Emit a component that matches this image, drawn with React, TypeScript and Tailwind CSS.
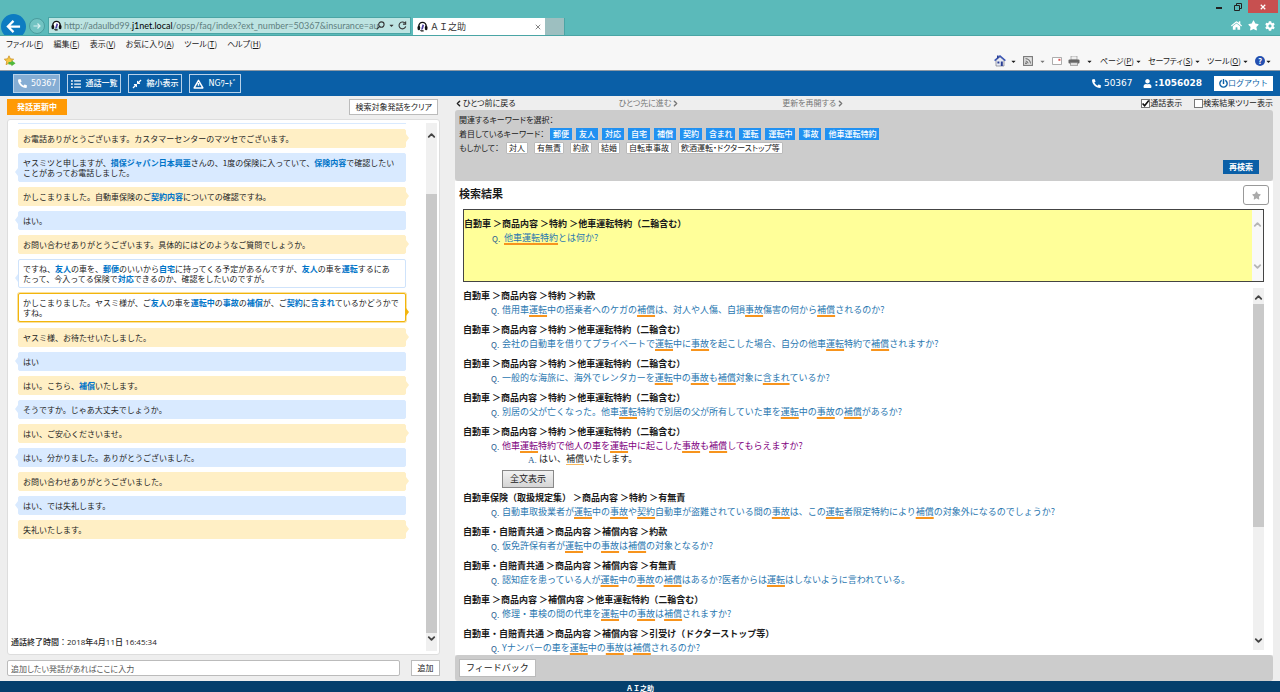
import type { ReactNode } from 'react';
import {
  FaCaretDown,
  FaCog,
  FaCompressAlt,
  FaHome,
  FaListUl,
  FaPhoneAlt,
  FaPowerOff,
  FaStar,
  FaUser,
} from 'react-icons/fa';
import { ChevronDown, ChevronLeft, ChevronRight, ChevronUp } from 'lucide-react';

type Message = { from: 'operator' | 'customer'; text: string; state?: 'hit' | 'active' };

// [ ] marks a keyword
const messages: Message[] = [
  { from: 'operator', text: 'お電話ありがとうございます。カスタマーセンターのマツセでございます。' },
  {
    from: 'customer',
    text: 'ヤスミツと申しますが、[損保ジャパン日本興亜]さんの、1度の保険に入っていて、[保険内容]で確認したいことがあってお電話しました。',
  },
  { from: 'operator', text: 'かしこまりました。自動車保険のご[契約内容]についての確認ですね。' },
  { from: 'customer', text: 'はい。' },
  { from: 'operator', text: 'お問い合わせありがとうございます。具体的にはどのようなご質問でしょうか。' },
  {
    from: 'customer',
    state: 'hit',
    text: 'ですね、[友人]の車を、[郵便]のいいから[自宅]に持ってくる予定があるんですが、[友人]の車を[運転]するにあたって、今入ってる保険で[対応]できるのか、確認をしたいのですが。',
  },
  {
    from: 'operator',
    state: 'active',
    text: 'かしこまりました。ヤスミ様が、ご[友人]の車を[運転中]の[事故]の[補償]が、ご[契約]に[含まれ]ているかどうかですね。',
  },
  { from: 'operator', text: 'ヤスミ様、お待たせいたしました。' },
  { from: 'customer', text: 'はい' },
  { from: 'operator', text: 'はい。こちら、[補償]いたします。' },
  { from: 'customer', text: 'そうですか。じゃあ大丈夫でしょうか。' },
  { from: 'operator', text: 'はい、ご安心くださいませ。' },
  { from: 'customer', text: 'はい。分かりました。ありがとうございました。' },
  { from: 'operator', text: 'お問い合わせありがとうございました。' },
  { from: 'customer', text: 'はい、では失礼します。' },
  { from: 'operator', text: '失礼いたします。' },
];

const keywords = ['郵便', '友人', '対応', '自宅', '補償', '契約', '含まれ', '運転', '運転中', '事故', '他車運転特約'];
const suggestions = ['対人', '有無責', '約款', '結婚', '自転車事故', '飲酒運転・ドクターストップ等'];

type Result = { path: string; question: string; answer?: string };

const results: Result[] = [
  {
    path: '自動車 ＞商品内容 ＞特約 ＞約款',
    question: '借用車[運転]中の搭乗者へのケガの[補償]は、対人や人傷、自損[事故]傷害の何から[補償]されるのか?',
  },
  {
    path: '自動車 ＞商品内容 ＞特約 ＞他車運転特約（二輪含む）',
    question: '会社の自動車を借りてプライベートで[運転]中に[事故]を起こした場合、自分の他車[運転]特約で[補償]されますか?',
  },
  {
    path: '自動車 ＞商品内容 ＞特約 ＞他車運転特約（二輪含む）',
    question: '一般的な海旅に、海外でレンタカーを[運転]中の[事故]も[補償]対象に[含まれ]ているか?',
  },
  {
    path: '自動車 ＞商品内容 ＞特約 ＞他車運転特約（二輪含む）',
    question: '別居の父が亡くなった。他車[運転]特約で別居の父が所有していた車を[運転]中の[事故]の[補償]があるか?',
  },
  {
    path: '自動車 ＞商品内容 ＞特約 ＞他車運転特約（二輪含む）',
    question: '他車[運転]特約で他人の車を[運転]中に起こした[事故]も[補償]してもらえますか?',
    answer: 'はい、[補償]いたします。',
  },
  {
    path: '自動車保険（取扱規定集） ＞商品内容 ＞特約 ＞有無責',
    question:
      '自動車取扱業者が[運転]中の[事故]や[契約]自動車が盗難されている間の[事故]は、この[運転]者限定特約により[補償]の対象外になるのでしょうか?',
  },
  {
    path: '自動車・自賠責共通 ＞商品内容 ＞補償内容 ＞約款',
    question: '仮免許保有者が[運転]中の[事故]は[補償]の対象となるか?',
  },
  {
    path: '自動車・自賠責共通 ＞商品内容 ＞補償内容 ＞有無責',
    question: '認知症を患っている人が[運転]中の[事故]の[補償]はあるか?医者からは[運転]はしないように言われている。',
  },
  {
    path: '自動車 ＞商品内容 ＞補償内容 ＞他車運転特約（二輪含む）',
    question: '修理・車検の間の代車を[運転]中の[事故]は[補償]されますか?',
  },
  {
    path: '自動車・自賠責共通 ＞商品内容 ＞補償内容 ＞引受け（ドクターストップ等）',
    question: 'Yナンバーの車を[運転]中の[事故]は[補償]されるのか?',
  },
];

const hitUnderline =
  'underline decoration-[#f7941d] decoration-2 underline-offset-2 [text-decoration-skip-ink:none]';

function Marked({ text, className }: { text: string; className: string }) {
  return (
    <>
      {text.split(/[[\]]/).map((part, i) =>
        i % 2 ? (
          <span key={i} className={className}>
            {part}
          </span>
        ) : (
          part
        ),
      )}
    </>
  );
}

function Favicon() {
  return (
    <svg viewBox="0 0 12 12" className="size-[11px] shrink-0">
      <path d="M2 8V5.5a4 4 0 0 1 8 0V8" fill="#fff" stroke="#111" strokeWidth="1.6" />
      <rect x="0.6" y="5.5" width="2.8" height="4.5" rx="1.2" fill="#111" />
      <rect x="8.6" y="5.5" width="2.8" height="4.5" rx="1.2" fill="#111" />
      <path d="M4.4 9.5 6 3.5l1.8 1L6.4 9z" fill="#4b3fa0" />
      <path d="M3 10.2h4.2v1.2H4.5z" fill="#111" />
    </svg>
  );
}

function BrowserTop() {
  return (
    <div className="flex h-9 shrink-0 justify-between overflow-hidden border-b border-[#4aa5a5] bg-[#5bbaba] pl-px">
      <div className="flex min-w-0 items-end">
        <button aria-label="戻る" className="-mb-1 flex size-[25px] shrink-0 items-center justify-center rounded-full bg-[#0d7cc1]">
          <svg viewBox="0 0 16 16" className="size-[15px]" fill="none" stroke="#fff" strokeWidth="2.4">
            <path d="M15 8H2M8 2 2 8l6 6" />
          </svg>
        </button>
        <button
          aria-label="進む"
          className="mb-px ml-[3px] flex size-4 shrink-0 items-center justify-center rounded-full border border-[#4a9c9e] bg-[#71c3c2]"
        >
          <svg viewBox="0 0 16 16" className="size-2" fill="none" stroke="#d9f2f1" strokeWidth="2.4">
            <path d="M1 8h13M9 3l5 5-5 5" />
          </svg>
        </button>
        <div className="mb-px ml-[3px] flex h-[17px] w-[363px] items-center border border-[#4aa5a5] bg-[#bde4e2] px-[2px]">
          <Favicon />
          <div className="ml-[2px] min-w-0 flex-1 font-[Lato,'Noto_Sans_CJK_JP',sans-serif] text-[9px] leading-3 whitespace-nowrap text-[#5f7f80]">
            http://adaulbd99.<span className="text-black">j1net.local</span>/opsp/faq/index?ext_number=50367&amp;insurance=au
          </div>
          <button aria-label="検索" className="ml-[2px] flex items-center">
            <svg viewBox="0 0 10 10" className="size-[9px]" fill="none" stroke="#333" strokeWidth="1.2">
              <circle cx="6" cy="4" r="3" />
              <path d="M4 6 .8 9.2" />
            </svg>
          </button>
          <FaCaretDown className="ml-[3px] size-[7px] text-[#333]" />
          <button aria-label="更新" className="mr-px ml-[3px] flex items-center">
            <svg viewBox="0 0 10 10" className="size-[9px]" fill="none" stroke="#333" strokeWidth="1.2">
              <path d="M8.6 6A3.8 3.8 0 1 1 7.6 2.2M8.5.5v3h-3" />
            </svg>
          </button>
        </div>
        <div className="ml-[2px] flex h-[17px] w-[132px] items-center bg-white px-1 text-[9px] text-[#333]">
          <Favicon />
          <span className="ml-[2px] flex-1">ＡＩ之助</span>
          <button aria-label="タブを閉じる">
            <svg viewBox="0 0 8 8" className="size-[6px]" stroke="#777" strokeWidth="1.2">
              <path d="m1 1 6 6M7 1 1 7" />
            </svg>
          </button>
        </div>
        <button aria-label="新しいタブ" className="h-[17px] w-5 border-r border-[#4aa5a5] bg-[#9dbfc0]" />
      </div>
      <div className="flex flex-col items-end justify-between">
        <div className="mr-[2px] flex h-[13px] items-center">
          <button aria-label="最小化" className="mt-[2px] mr-3 h-[2px] w-[6px] bg-[#222]" />
          <button aria-label="元に戻す" className="mr-[6px]">
            <svg viewBox="0 0 8 8" className="size-[8px]" fill="none" stroke="#222">
              <path d="M.5 2.5h5v5h-5zM2.5 2.5v-2h5v5h-2" />
            </svg>
          </button>
          <button aria-label="閉じる" className="flex h-[13px] w-[30px] items-center justify-center bg-[#c75050]">
            <svg viewBox="0 0 8 8" className="size-[6px]" stroke="#fff" strokeWidth="1.6">
              <path d="m1 1 6 6M7 1 1 7" />
            </svg>
          </button>
        </div>
        <div className="mr-[5px] mb-1 flex items-center gap-[6px] text-white">
          <FaHome className="size-[11px]" />
          <FaStar className="size-[11px]" />
          <FaCog className="size-[10px]" />
        </div>
      </div>
    </div>
  );
}

function MenuItem({ label, hotkey }: { label: string; hotkey: string }) {
  return (
    <button>
      {label}(<span className="underline">{hotkey}</span>)
    </button>
  );
}

function CommandMenu({ label, hotkey }: { label: string; hotkey: string }) {
  return (
    <button className="flex items-center gap-px">
      <span>
        {label}(<span className="underline">{hotkey}</span>)
      </span>
      <FaCaretDown className="size-[7px]" />
    </button>
  );
}

function MenuBars() {
  return (
    <div className="shrink-0 border-b border-[#8d99a5] bg-[#f7f7f7] text-[8px] text-[#1a1a1a] [font-feature-settings:'palt']">
      <div className="flex h-4 items-center gap-[10px] px-[6px]">
        <MenuItem label="ファイル" hotkey="F" />
        <MenuItem label="編集" hotkey="E" />
        <MenuItem label="表示" hotkey="V" />
        <MenuItem label="お気に入り" hotkey="A" />
        <MenuItem label="ツール" hotkey="T" />
        <MenuItem label="ヘルプ" hotkey="H" />
      </div>
      <div className="flex h-[18px] items-center justify-between pr-2 pl-1">
        <svg viewBox="0 0 12 12" className="size-3">
          <path d="m5 .8 1.4 3 3.3.4-2.4 2.3.6 3.2L5 8.1 2.1 9.7l.6-3.2L.3 4.2l3.3-.4z" fill="#f5c842" stroke="#c98a1b" strokeWidth=".7" />
          <path d="M4.5 7h3V5.2l4 3-4 3V9.4h-3z" fill="#4fb83d" />
        </svg>
        <div className="flex items-center gap-[6px]">
          <div className="flex items-center gap-[6px] pr-px">
            <svg viewBox="0 0 12 12" className="mr-[-2px] size-3">
              <path d="M2 5v6h8V5L6 2z" fill="#e8ecf4" stroke="#667" strokeWidth=".6" />
              <path d="M.6 5.6 6 1l5.4 4.6" fill="none" stroke="#3a55b5" strokeWidth="1.4" />
              <path d="M3 .5h1.6v2.3L3 4zM3.4 6.5h2v2h-2zM6.8 6.5h2V11h-2z" fill="#2b3f94" />
            </svg>
            <FaCaretDown className="size-[7px]" />
            <svg viewBox="0 0 10 10" className="size-[10px]" fill="none" stroke="#777" strokeWidth="1.1">
              <rect x=".6" y=".6" width="8.8" height="8.8" fill="#e5e5e5" />
              <path d="M2.5 5a2.5 2.5 0 0 1 2.5 2.6M2.5 2.6a5 5 0 0 1 5 5" />
              <circle cx="3" cy="7.2" r=".5" />
            </svg>
            <FaCaretDown className="size-[7px] text-[#777]" />
            <svg viewBox="0 0 10 8" className="h-2 w-[10px]">
              <path d="M.5.5h9v7h-9z" fill="#fff" stroke="#999" strokeWidth=".8" />
              <path d="M6.4 1.8h2v2h-2z" fill="#d55" />
            </svg>
            <svg viewBox="0 0 12 10" className="h-[10px] w-3">
              <path d="M3 0h6v4H3z" fill="#eee" stroke="#888" strokeWidth=".6" />
              <rect x=".5" y="3.5" width="11" height="4" rx="1" fill="#666" />
              <path d="M2.5 6.5h7V9.6h-7z" fill="#ddd" stroke="#777" strokeWidth=".6" />
            </svg>
            <FaCaretDown className="size-[7px]" />
          </div>
          <CommandMenu label="ページ" hotkey="P" />
          <CommandMenu label="セーフティ" hotkey="S" />
          <CommandMenu label="ツール" hotkey="O" />
          <button aria-label="ヘルプ" className="flex items-center">
            <span className="flex size-[10px] items-center justify-center rounded-full bg-[#2450b0] text-[8px] leading-none font-bold text-white">
              ?
            </span>
            <FaCaretDown className="size-[7px]" />
          </button>
        </div>
      </div>
    </div>
  );
}

function HeaderButton({ icon, active, children }: { icon: ReactNode; active?: boolean; children: ReactNode }) {
  return (
    <button
      className={`flex h-[19px] items-center gap-1 border border-[#b8d2ea] px-[3px] text-[8px] font-medium ${active ? 'bg-[#85add4]' : ''}`}
    >
      {icon}
      {children}
    </button>
  );
}

function AppHeader() {
  return (
    <header className="flex h-[25px] shrink-0 items-center justify-between bg-[#0a5fa7] pr-[7px] pl-[13px] text-white">
      <div className="flex gap-[7px] font-['DejaVu_Sans','Noto_Sans_CJK_JP',sans-serif]">
        <HeaderButton active icon={<FaPhoneAlt className="ml-px size-[9px]" />}>
          50367
        </HeaderButton>
        <HeaderButton icon={<FaListUl className="size-[10px]" />}>通話一覧</HeaderButton>
        <HeaderButton icon={<FaCompressAlt className="size-[10px]" />}>縮小表示</HeaderButton>
        <HeaderButton
          icon={
            <svg viewBox="0 0 12 11" className="h-[10px] w-[11px]" fill="none" stroke="#fff" strokeWidth="1.6">
              <path d="M6 1.4 10.8 9.8H1.2zM6 4.5v3" strokeLinejoin="round" />
            </svg>
          }
        >
          NGﾜｰﾄﾞ
        </HeaderButton>
      </div>
      <div className="flex items-center font-['DejaVu_Sans','Noto_Sans_CJK_JP',sans-serif] text-[9px]">
        <FaPhoneAlt className="mr-[3px] size-[9px]" />
        50367
        <FaUser className="mr-[3px] ml-[10px] size-[9px]" />
        <b>:1056028</b>
        <button className="ml-3 flex h-[15px] items-center bg-white px-[5px] text-[8px] text-[#0a5fa7]">
          <FaPowerOff className="size-[9px]" />
          ログアウト
        </button>
      </div>
    </header>
  );
}

function ScrollBar({ className, thumb, disabled }: { className?: string; thumb?: ReactNode; disabled?: boolean }) {
  const color = disabled ? 'text-[#b5b5b5]' : 'text-[#444]';
  return (
    <div className={`flex w-[11px] shrink-0 flex-col items-center ${disabled ? 'bg-[#f8f8f8]' : 'bg-[#f0f0f0]'} ${className ?? ''}`}>
      <button aria-label="上へ" className={color}>
        <ChevronUp className="size-[11px]" strokeWidth={4} />
      </button>
      <div className="flex w-full flex-1 flex-col">{thumb}</div>
      <button aria-label="下へ" className={color}>
        <ChevronDown className="size-[11px]" strokeWidth={4} />
      </button>
    </div>
  );
}

function Bubble({ message }: { message: Message }) {
  const operator = message.from === 'operator';
  let box = operator ? 'border-[#ffefc5] bg-[#ffefc5]' : 'border-[#d9eaff] bg-[#d9eaff]';
  if (message.state === 'hit') box = 'border-[#cfe3fb] bg-white';
  if (message.state === 'active') box = 'mb-px border-[#f2b50c] bg-white ring-1 ring-[#f2b50c]/40';

  let tail = operator ? 'border-l-[#ffefc5]' : 'border-r-[#d9eaff]';
  if (message.state === 'active') tail = 'border-l-[#f2b50c]';

  return (
    <div
      className={`relative rounded-[2px] border px-1 pt-1 pb-[3px] text-[8px] leading-[10px] text-[#222] [line-break:strict] ${box}`}
    >
      <Marked text={message.text} className="font-bold text-[#0074c8]" />
      <span
        className={`absolute bottom-[5px] border-y-4 border-y-transparent ${operator ? '-right-1 border-l-[3px]' : '-left-1 border-r-[3px]'} ${tail}`}
      />
    </div>
  );
}

function TalkPanel() {
  return (
    <section className="flex min-h-0 flex-col">
      <div className="flex items-start justify-between pt-[3px] pr-[2px]">
        <span className="flex h-4 w-[60px] items-center justify-center bg-[#ff9a05] text-[8px] font-bold text-white">発話更新中</span>
        <button className="h-4 border border-[#bbb] bg-white px-[5px] text-[8px] leading-[14px] text-[#222] [font-feature-settings:'palt']">
          検索対象発話をクリア
        </button>
      </div>
      <div className="mt-1 flex min-h-0 flex-1 rounded-[3px] border border-[#ddd] bg-white py-[3px] pr-[2px]">
        <div className="flex min-w-0 flex-1 flex-col">
          <div className="flex min-h-0 flex-1 flex-col gap-[5px] overflow-hidden pr-5 pl-[10px]">
            <div className="h-px shrink-0 bg-[#d9eaff]" />
            {messages.map((m, i) => (
              <Bubble key={i} message={m} />
            ))}
          </div>
          <div className="px-[3px] pb-[3px] font-['Open_Sans','Noto_Sans_CJK_JP',sans-serif] text-[8px] leading-3 font-medium text-[#222]">
            通話終了時間：2018年4月11日 16:45:34
          </div>
        </div>
        <ScrollBar
          className="py-[7px]"
          thumb={
            <>
              <div className="grow-[53]" />
              <div className="grow-[435] bg-[#c9c9c9]" />
            </>
          }
        />
      </div>
      <form className="flex h-[26px] shrink-0 items-center justify-between" onSubmit={(e) => e.preventDefault()}>
        <input
          aria-label="発話の追加"
          placeholder="追加したい発話があればここに入力"
          className="mr-[11px] h-4 min-w-0 flex-1 rounded-[2px] border border-[#bbb] bg-white px-[3px] text-[8px] [font-feature-settings:'palt'] placeholder:text-[#555]"
        />
        <button className="h-4 w-[29px] border border-[#bbb] bg-white text-[8px] leading-[14px] text-[#222]">追加</button>
      </form>
    </section>
  );
}

function ResultItem({ result }: { result: Result }) {
  return (
    <li className={result.answer ? 'mb-[3px]' : 'mb-[6px]'}>
      <h3 className="font-bold text-[#1a1a1a]">{result.path}</h3>
      <div className="flex h-[14px] pl-7">
        <span className="w-[11px] shrink-0 text-[8px] leading-4 text-[#1f5c8f]">Q.</span>
        <a href="#q" className={result.answer ? 'text-[#800080]' : 'text-[#2a77b0]'}>
          <Marked text={result.question} className={hitUnderline} />
        </a>
      </div>
      {result.answer && (
        <div className="pl-[39px]">
          <p className="flex h-3 pl-[26px] leading-3 text-[#1a1a1a]">
            <span className="w-[11px] shrink-0 font-['Liberation_Serif',serif] text-[9px] leading-[14px] text-[#1f5c8f]">A.</span>
            <span>
              <Marked
                text={result.answer}
                className="underline decoration-[#f7b95d] decoration-1 underline-offset-2 [text-decoration-skip-ink:none]"
              />
            </span>
          </p>
          <button className="mt-[5px] block h-[18px] border border-[#888] bg-gradient-to-b from-[#f2f2f2] to-[#d5d5d5] px-[7px] leading-4 text-[#222]">
            全文表示
          </button>
        </div>
      )}
    </li>
  );
}

function ViewToggle({ label, defaultChecked }: { label: string; defaultChecked?: boolean }) {
  return (
    <label className="relative flex items-center">
      <input
        type="checkbox"
        defaultChecked={defaultChecked}
        className="peer size-[9px] appearance-none border border-[#777] bg-white"
      />
      <svg
        viewBox="0 0 9 9"
        className="pointer-events-none absolute left-0 hidden size-[9px] peer-checked:block"
        fill="none"
        stroke="#111"
        strokeWidth="1.6"
      >
        <path d="m1.6 4.4 2 2.3L7.8 1.4" />
      </svg>
      {label}
    </label>
  );
}

function SearchPanel() {
  return (
    <section className="flex min-h-0 min-w-0 flex-col">
      <div className="flex h-[14px] shrink-0 items-center text-[8px] text-[#777] [font-feature-settings:'palt']">
        <div className="w-1/5">
          <button className="flex items-center text-[#222]">
            <ChevronLeft className="-ml-px size-[9px]" strokeWidth={4} />
            ひとつ前に戻る
          </button>
        </div>
        <div className="w-1/5">
          <button className="flex items-center">
            ひとつ先に進む
            <ChevronRight className="size-[9px]" strokeWidth={4} />
          </button>
        </div>
        <button className="flex items-center">
          更新を再開する
          <ChevronRight className="size-[9px]" strokeWidth={4} />
        </button>
        <div className="ml-auto flex gap-3 text-[#222]">
          <ViewToggle label="通話表示" defaultChecked />
          <ViewToggle label="検索結果ツリー表示" />
        </div>
      </div>

      <div className="flex h-[71px] shrink-0 flex-col rounded-[3px] bg-[#ccc] px-1 pt-[3px] text-[8px] text-[#1a1a1a] [font-feature-settings:'palt']">
        <p className="leading-[14px]">関連するキーワードを選択：</p>
        <div className="flex h-[14px] items-center">
          <span className="w-[91px]">着目しているキーワード：</span>
          <div className="flex gap-1">
            {keywords.map((k) => (
              <button key={k} className="h-3 bg-[#2191f1] px-[3px] leading-3 font-medium text-white">
                {k}
              </button>
            ))}
          </div>
        </div>
        <div className="flex h-[14px] items-center">
          <span className="w-[47px]">もしかして：</span>
          <div className="flex gap-[6px]">
            {suggestions.map((s) => (
              <button key={s} className="h-3 rounded-[1px] border border-[#bbb] bg-white px-[2px] leading-[10px]">
                {s}
              </button>
            ))}
          </div>
        </div>
        <button className="mt-[5px] mr-[10px] h-[14px] w-9 self-end bg-[#0a5fa7] font-bold text-white">再検索</button>
      </div>

      <div className="flex min-h-0 flex-1 flex-col bg-white pr-[9px] pl-2 text-[9px] leading-[14px]">
        <div className="-mr-[5px] -ml-1 flex h-7 shrink-0 items-center justify-between">
          <h2 className="pb-1 text-[11px] font-bold text-[#1a1a1a]">検索結果</h2>
          <button
            aria-label="お気に入り"
            className="flex h-5 w-[26px] items-center justify-center rounded-[3px] border border-[#999] text-[#aaa]"
          >
            <FaStar className="size-[9px]" />
          </button>
        </div>
        <div className="flex h-[73px] shrink-0 border border-[#444] bg-[#ffff99]">
          <div className="flex-1 pt-[7px]">
            <h3 className="font-bold text-[#1a1a1a]">自動車 ＞商品内容 ＞特約 ＞他車運転特約（二輪含む）</h3>
            <div className="flex h-[14px] pl-7">
              <span className="w-3 shrink-0 text-[8px] leading-4 text-[#1f5c8f]">Q.</span>
              <a href="#q" className="text-[#2a77b0]">
                <Marked text="[他車運転特約]とは何か?" className={hitUnderline} />
              </a>
            </div>
          </div>
          <ScrollBar disabled className="py-[9px]" />
        </div>
        <div className="mt-[6px] flex min-h-0 flex-1">
          <ul className="min-w-0 flex-1 overflow-hidden pt-px">
            {results.map((r, i) => (
              <ResultItem key={i} result={r} />
            ))}
          </ul>
          <ScrollBar
            className="mb-[5px] py-1"
            thumb={
              <>
                <div className="grow-[1]" />
                <div className="grow-[224] bg-[#c9c9c9]" />
                <div className="grow-[108]" />
              </>
            }
          />
        </div>
      </div>
      <div className="flex h-[26px] shrink-0 items-center rounded-[3px] bg-[#ccc] px-1">
        <button className="h-[18px] border border-[#bbb] bg-white px-[6px] text-[9px] leading-4 text-[#222]">フィードバック</button>
      </div>
    </section>
  );
}

export default function App() {
  return (
    <div lang="ja" className="flex h-screen flex-col overflow-hidden bg-[#eee] font-['Noto_Sans_CJK_JP',sans-serif]">
      <BrowserTop />
      <MenuBars />
      <AppHeader />
      <main className="grid min-h-0 flex-1 grid-cols-[433fr_818fr] grid-rows-[minmax(0,1fr)] gap-[15px] px-[7px]">
        <TalkPanel />
        <SearchPanel />
      </main>
      <footer className="h-[11px] shrink-0 overflow-hidden bg-[#053f6c] text-center text-[7px] leading-[14px] font-bold text-white">
        ＡＩ之助
      </footer>
    </div>
  );
}
